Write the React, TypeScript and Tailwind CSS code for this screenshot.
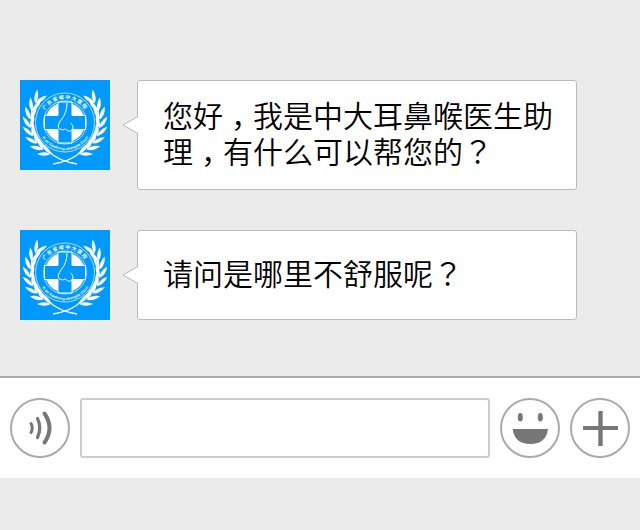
import React from "react";

const NODES = [-32, -18, -4, 10, 24, 38, 52, 66];
const LEAF = "M0 0 Q3.6 -6 0 -14 Q-3.6 -6 0 0Z";

function Branch() {
  const R = 35;
  return (
    <g>
      {NODES.map((a) => {
        const rad = (a * Math.PI) / 180;
        const x = 45 - R * Math.cos(rad);
        const y = 42 + R * Math.sin(rad);
        return (
          <g key={a} transform={`translate(${x.toFixed(2)} ${y.toFixed(2)}) rotate(${-a})`}>
            <path d={LEAF} fill="#fff" transform="rotate(-24)" />
            <path d={LEAF} fill="#fff" transform="rotate(24)" />
          </g>
        );
      })}
      <path d="M12 28 Q8 54 33 75 Q43 82 57 84" fill="none" stroke="#fff" strokeWidth="1.4" />
    </g>
  );
}

function Logo({ id }: { id: string }) {
  return (
    <svg width="90" height="90" viewBox="0 0 90 90" className="block shrink-0">
      <rect width="90" height="90" fill="#0099ff" />
      <Branch />
      <g transform="translate(90 0) scale(-1 1)">
        <Branch />
      </g>
      <circle cx="45" cy="42.5" r="29.500" fill="#0099ff" stroke="#bfe5ff" strokeWidth="0.9" />
      <circle cx="45" cy="42.5" r="21.5" fill="none" stroke="#bfe5ff" strokeWidth="0.9" />
      <circle cx="45" cy="42.5" r="20" fill="#fff" />
      <path
        d="M38 22 H52 V35.500 H65.500 V49.500 H52 V63 H38 V49.500 H24.500 V35.500 H38Z"
        fill="#0099ff"
        stroke="#fff"
        strokeWidth="1"
      />
      <path
        d="M47 23 Q47 33 41 40 Q36.500 46 39.500 49 Q42.500 51 45.500 49 Q49 53 52 50 Q54.500 46 50.500 43"
        fill="none"
        stroke="#fff"
        strokeWidth="1"
      />
      <defs>
        <path id={`${id}-top`} d="M21.500 42.500 A23.500 23.500 0 0 1 68.500 42.500" />
        <path id={`${id}-bottom`} d="M17.500 42.500 A27.500 27.500 0 0 0 72.500 42.500" />
      </defs>
      <text fontSize="5" fontWeight="700" fill="#fff" letterSpacing="1" fontFamily="'Noto Sans CJK SC', sans-serif">
        <textPath href={`#${id}-top`} startOffset="50%" textAnchor="middle">广东省岐中大医院</textPath>
      </text>
      <text fontSize="3.8" fontWeight="700" fill="#fff" fontFamily="'Liberation Sans', sans-serif">
        <textPath href={`#${id}-bottom`} startOffset="50%" textAnchor="middle">Yi an Xiaohong zhongda Zixun</textPath>
      </text>
    </svg>
  );
}

function Comma() {
  return <span className="relative left-[8px]">，</span>;
}

function Ask() {
  return <span className="font-['Noto_Sans_CJK_TC']">？</span>;
}

function Bubble({ id, children }: { id: string; children: React.ReactNode }) {
  return (
    <div className="flex items-start">
      <Logo id={id} />
      <div className="relative ml-[27px] flex min-h-[90px] w-[440px] items-center rounded-[3px] border border-[#bbbbbb] bg-white pb-[21px] pl-[25px] pr-[20px] pt-[15px] text-[30px] font-[350] leading-[36px] text-black">
        <svg width="16" height="18" viewBox="0 0 16 18" className="absolute left-[-16px] top-[35px]">
          <polygon points="16,0.5 1,9 16,17.5" fill="#fff" />
          <polyline points="16,0.5 1,9 16,17.5" fill="none" stroke="#bbbbbb" strokeWidth="1" />
        </svg>
        <p>{children}</p>
      </div>
    </div>
  );
}

function Circle({ children }: { children: React.ReactNode }) {
  return (
    <button className="h-[60px] w-[60px] shrink-0 rounded-full border-2 border-[#aaaaaa] bg-white">
      <svg width="56" height="56" viewBox="2 2 56 56" className="block">{children}</svg>
    </button>
  );
}

export default function App() {
  return (
    <div className="flex h-[530px] w-[640px] flex-col overflow-hidden bg-[#ebebeb] font-['Noto_Sans_CJK_SC',sans-serif]">
      <div className="flex h-[376px] flex-col gap-[40px] pl-[20px] pt-[80px]">
        <Bubble id="a">
          您好<Comma />我是中大耳鼻喉医生助理<Comma />有什么可以帮您的<Ask />
        </Bubble>
        <Bubble id="b">
          请问是哪里不舒服呢<Ask />
        </Bubble>
      </div>
      <div className="flex h-[102px] items-center gap-[10px] border-t-2 border-[#aaaaaa] bg-white px-[10px]">
        <Circle>
          <g fill="none" stroke="#777" strokeLinecap="round">
            <path d="M21 25.5 Q23.500 30 21 34.500" strokeWidth="3" />
            <path d="M27.500 20.500 Q32 30 27.500 39.500" strokeWidth="3.200" />
            <path d="M34.500 15.500 Q44.500 30 34.500 44.500" strokeWidth="4" />
          </g>
        </Circle>
        <div className="h-[60px] flex-1 rounded-[3px] border-2 border-[#cccccc] bg-white" />
        <Circle>
          <ellipse cx="20.300" cy="19.300" rx="2.500" ry="4.300" fill="#777" />
          <ellipse cx="40.300" cy="19.300" rx="2.500" ry="4.300" fill="#777" />
          <path d="M12.700 31 H48 Q46 46 30.300 46 Q14.500 46 12.700 31Z" fill="#777" />
        </Circle>
        <Circle>
          <rect x="13" y="28" width="35" height="4" fill="#777" />
          <rect x="28.300" y="13" width="4.400" height="35" fill="#777" />
        </Circle>
      </div>
    </div>
  );
}
